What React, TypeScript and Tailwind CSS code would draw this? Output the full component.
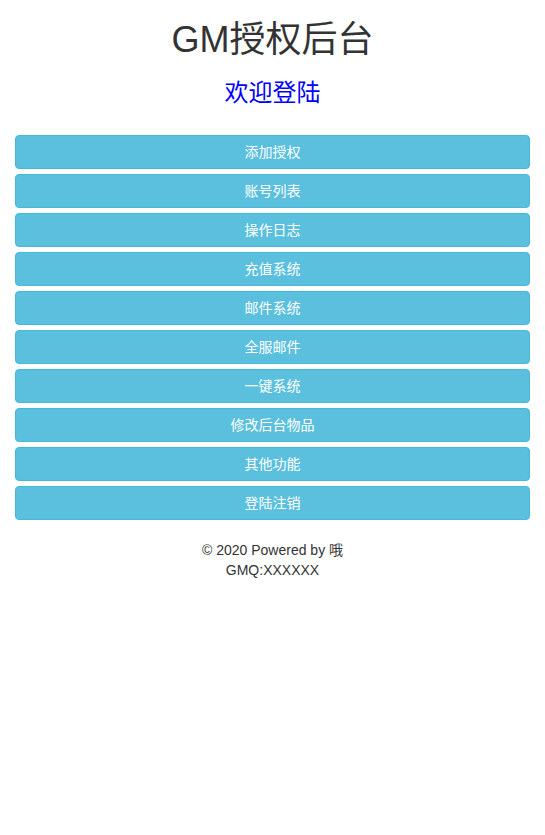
const items = [
  '添加授权',
  '账号列表',
  '操作日志',
  '充值系统',
  '邮件系统',
  '全服邮件',
  '一键系统',
  '修改后台物品',
  '其他功能',
  '登陆注销',
]

export default function App() {
  return (
    <div
      className="min-h-screen bg-white px-[15px] text-[14px] leading-[20px] text-[#333]"
      style={{ fontFamily: '"Liberation Sans", "Noto Sans CJK SC", sans-serif' }}
    >
      <h1 className="mt-[20px] text-center text-[36px] leading-[39.6px] font-normal text-[#333]">GM授权后台</h1>
      <h3 className="mt-[20px] text-center text-[24px] leading-[26.4px] font-normal text-[#0000ff]">欢迎登陆</h3>
      <div className="mt-[29px] flex flex-col gap-[5px]">
        {items.map((label) => (
          <button
            key={label}
            className="h-[34px] w-full rounded-[4px] border border-[#46b8da] bg-[#5bc0de] text-[14px] text-white"
          >
            {label}
          </button>
        ))}
      </div>
      <div className="mt-[20px] text-center">
        <p>© 2020 Powered by 哦</p>
        <p>GMQ:XXXXXX</p>
      </div>
    </div>
  )
}
